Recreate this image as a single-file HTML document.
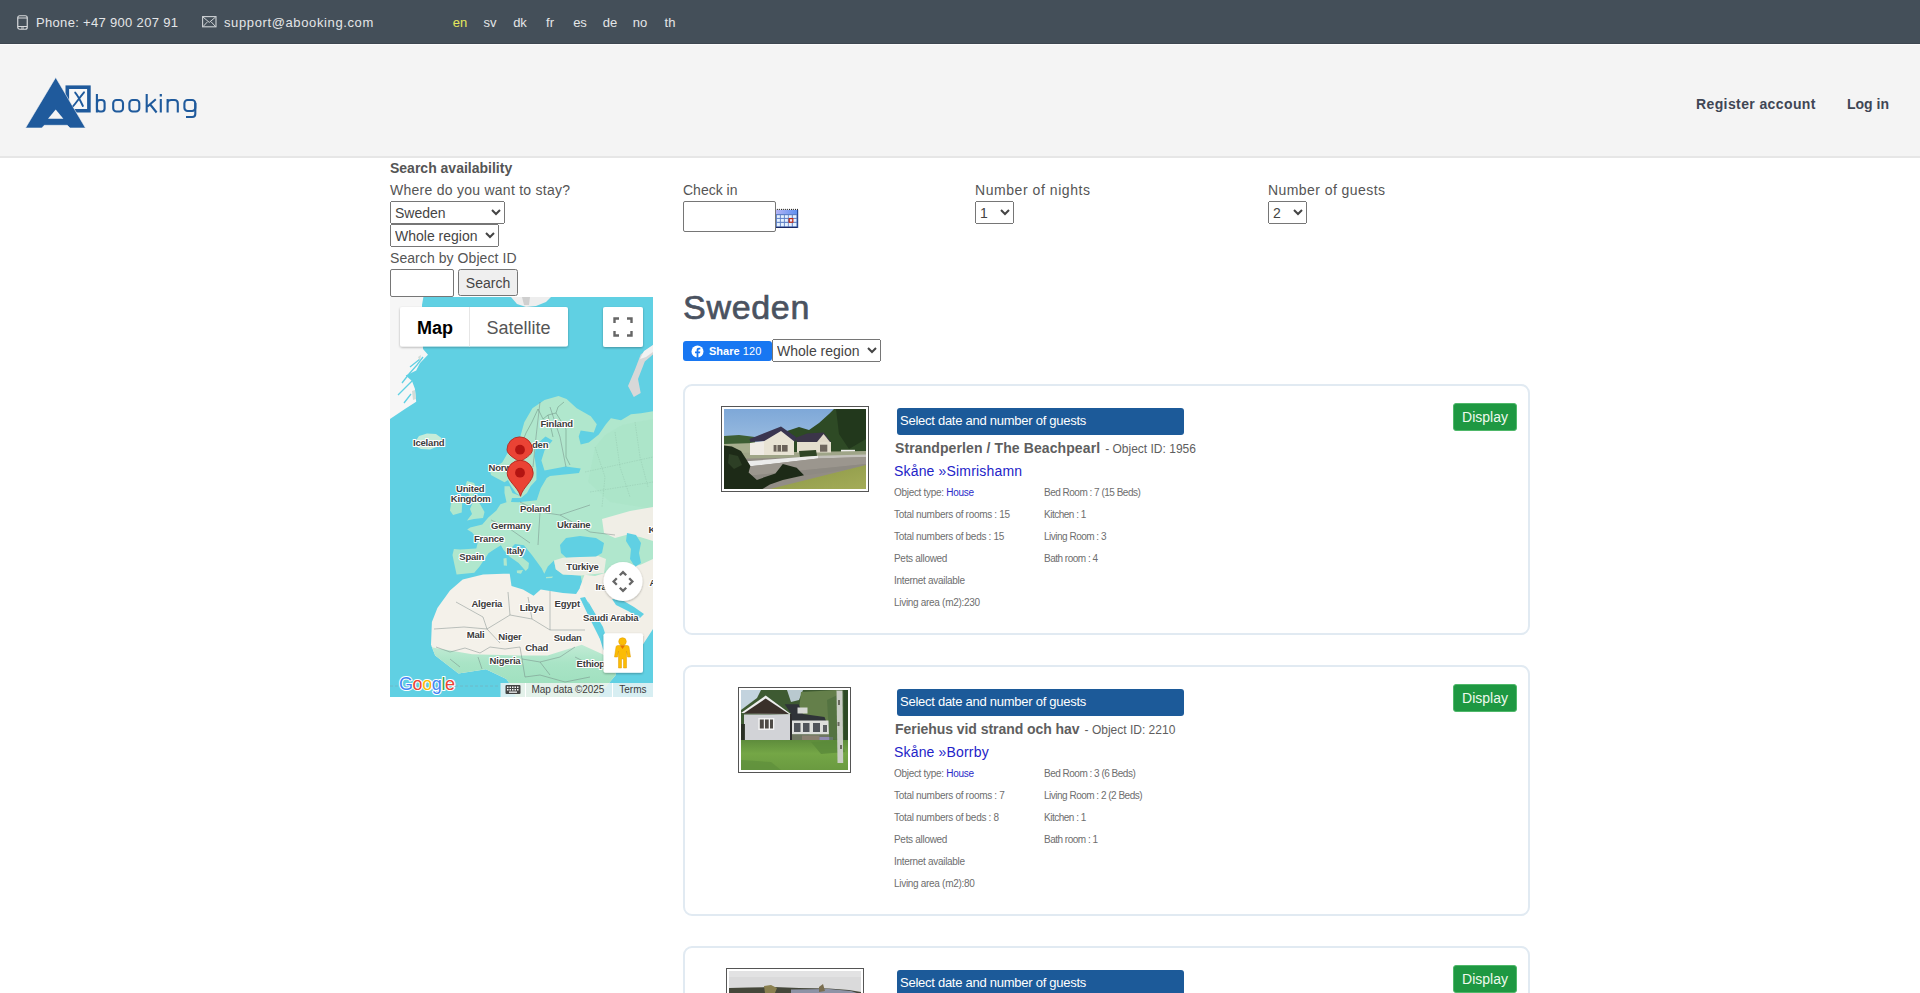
<!DOCTYPE html>
<html><head><meta charset="utf-8">
<style>
*{box-sizing:border-box}
html,body{margin:0;padding:0}
body{width:1920px;height:993px;overflow:hidden;position:relative;background:#fff;font-family:"Liberation Sans",sans-serif;color:#555}
.a{position:absolute;white-space:nowrap}
#top{position:absolute;left:0;top:0;width:1920px;height:44px;background:#444f59;border-bottom:1px solid #3d4650}
#top .t{color:#e4e6e8;font-size:13px;top:15px;line-height:16px}
#top .l{color:#e4e6e8;font-size:13px;top:15px;line-height:16px;width:30px;text-align:center}
#hdr{position:absolute;left:0;top:44px;width:1920px;height:114px;background:#f4f4f4;border-top:1px solid #fbfbfb;border-bottom:2px solid #e6e6e6}
.nav{color:#3f4654;font-size:14px;font-weight:bold;top:96px;line-height:17px}
.lbl{font-size:14px;color:#555;line-height:17px}
select{font-family:"Liberation Sans",sans-serif;font-size:14px;color:#444;margin:0}
.card{position:absolute;left:683px;width:847px;height:251px;border:2px solid #e1eaf2;border-radius:9px;background:#fff}
.sel{position:absolute;left:212px;top:22px;width:287px;height:27px;background:#1c5a99;border-radius:3px;color:#fff;font-size:13px;line-height:25px;padding-left:3px;letter-spacing:-0.26px}
.ttl{position:absolute;left:210px;letter-spacing:0.1px;top:54px;font-size:14px;font-weight:bold;color:#5e5e5e;line-height:17px;white-space:nowrap}
.ttl .oid{font-weight:normal;font-size:12px;margin-left:1px;letter-spacing:0}
.loc{position:absolute;left:209px;top:77px;letter-spacing:0.17px;font-size:14px;color:#2323c8;line-height:17px;white-space:nowrap}
.det{position:absolute;font-size:10px;color:#6e6e6e;line-height:12px;white-space:nowrap;letter-spacing:-0.3px}
.det.r{letter-spacing:-0.5px}
.det b{font-weight:normal;color:#2b2bc8}
.disp{position:absolute;left:768px;top:16.5px;width:64px;height:28px;background:#1e9842;border:1px solid #4fb86a;border-radius:3px;color:#eefaee;font-size:14px;line-height:26px;text-align:center}
.thumb{position:absolute;border:1px solid #555;background:#fff;padding:2px}
.thumb svg{display:block}
</style></head><body>

<div id="top">
  <svg class="a" style="left:17px;top:15px" width="11" height="15" viewBox="0 0 11 15"><rect x="0.75" y="0.75" width="9.5" height="13.5" rx="2" fill="none" stroke="#d8dadc" stroke-width="1.2"/><line x1="1" y1="3" x2="10" y2="3" stroke="#d8dadc" stroke-width="1"/><line x1="1" y1="11.5" x2="10" y2="11.5" stroke="#d8dadc" stroke-width="1"/><line x1="4" y1="13" x2="7" y2="13" stroke="#d8dadc" stroke-width="1"/></svg>
  <div id="tphone" class="a t" style="left:36px;letter-spacing:0.32px">Phone: +47 900 207 91</div>
  <svg class="a" style="left:202px;top:16px" width="15" height="12" viewBox="0 0 15 12"><rect x="0.6" y="0.6" width="13.4" height="10.2" fill="none" stroke="#cfd3d6" stroke-width="1.1"/><path d="M1 1 L7.3 6.4 L13.6 1 M1 10.6 L5.6 5.7 M13.6 10.6 L9 5.7" fill="none" stroke="#cfd3d6" stroke-width="1"/></svg>
  <div id="tsup" class="a t" style="left:224px;letter-spacing:0.62px">support@abooking.com</div>
  <div class="a l" style="left:445px;color:#e6e85c">en</div>
  <div class="a l" style="left:475px">sv</div>
  <div class="a l" style="left:505px">dk</div>
  <div class="a l" style="left:535px">fr</div>
  <div class="a l" style="left:565px">es</div>
  <div class="a l" style="left:595px">de</div>
  <div class="a l" style="left:625px">no</div>
  <div class="a l" style="left:655px">th</div>
</div>

<div id="hdr"></div>
<!-- logo -->
<svg class="a" style="left:20px;top:70px" width="190" height="60" viewBox="20 70 190 60">
  <rect x="65.5" y="85.4" width="25.2" height="27.1" fill="#1f5a9c"/>
  <rect x="69.1" y="89" width="18" height="20" fill="#f7f7f7"/>
  <path d="M55.7 77.5 L25.5 128 L41.8 128 L44.3 125.3 L67.3 125.3 L70 128 L85.5 128 Z" fill="#1f5a9c" stroke="#f7f7f7" stroke-width="0.6"/>
  <path d="M55.7 109.6 L48 118.8 L63.4 118.8 Z" fill="#f4f4f4"/>
  <path d="M84 92.3 C80.5 96.5 77 101.5 73.3 106 M75.2 92.6 C78.2 96.2 80.6 101 82.9 106" fill="none" stroke="#1f5a9c" stroke-width="1.9" stroke-linecap="round"/>
  <g fill="none" stroke="#1f5a9c" stroke-width="2.1">
<path d="M96.9 94 V112.5"/>
<rect x="97" y="100" width="7.6" height="11.5" rx="3"/>
<rect x="113.2" y="100" width="9.8" height="11.5" rx="3.3"/>
<rect x="129.4" y="100" width="9.9" height="11.5" rx="3.3"/>
<path d="M146.7 94 V112.5 M147.5 106.5 L155.8 99.3 M150.2 104.5 L156.6 112.5"/>
<path d="M160.8 99 V112.5"/>
<path d="M167.6 99 V112.5 M167.6 103.5 Q167.6 100 171.3 100 H174.3 Q177.8 100 177.8 103.5 V112.5"/>
<rect x="184.4" y="100" width="10.9" height="11" rx="3.2"/>
<path d="M195.3 103 V114 Q195.3 117 192.3 117 H186"/>
</g>
<rect x="159.7" y="94" width="2.2" height="2.5" fill="#1f5a9c"/>
</svg>
<div id="treg" class="a nav" style="left:1696px;letter-spacing:0.39px">Register account</div>
<div id="tlog" class="a nav" style="left:1847px">Log in</div>

<!-- search -->
<div class="a lbl" style="left:390px;top:160px;font-weight:bold" id="tsa">Search availability</div>
<div class="a lbl" style="left:390px;top:182px;letter-spacing:0.26px" id="twhere">Where do you want to stay?</div>
<select class="a" style="left:390px;top:201px;width:115px;height:23px"><option>Sweden</option></select>
<select class="a" style="left:390px;top:224px;width:109px;height:23px"><option>Whole region</option></select>
<div class="a lbl" style="left:390px;top:250px;letter-spacing:0.07px" id="tsbo">Search by Object ID</div>
<input class="a" style="left:390px;top:269px;width:64px;height:28px;border:1px solid #767676;border-radius:2px;margin:0">
<button class="a" style="left:458px;top:269px;width:60px;height:27px;font-family:'Liberation Sans';font-size:14px;color:#444;margin:0;padding:0">Search</button>

<div class="a lbl" style="left:683px;top:182px" id="tci">Check in</div>
<input class="a" style="left:683px;top:201px;width:93px;height:31px;border:1px solid #767676;border-radius:2px;margin:0">
<svg class="a" style="left:776px;top:204px" width="23" height="24" viewBox="0 0 23 24">
<defs><linearGradient id="calh" x1="0" y1="0" x2="1" y2="0"><stop offset="0" stop-color="#b4b4f4"/><stop offset="1" stop-color="#5a8ef0"/></linearGradient></defs>
<rect x="0" y="6" width="22" height="18" fill="#5d7fc6"/>
<rect x="0" y="6" width="22" height="4" fill="url(#calh)"/>
<rect x="0" y="22.8" width="22" height="1.2" fill="#1c2a66"/>
<rect x="21" y="6" width="1.2" height="18" fill="#2a4a90"/>
<g fill="#e6f2ff">
<rect x="0.9" y="11.2" width="3" height="2.7"/><rect x="4.8" y="11.2" width="3.1" height="2.7"/><rect x="8.8" y="11.2" width="3.1" height="2.7"/><rect x="12.7" y="11.2" width="3.1" height="2.7"/><rect x="16.8" y="11.2" width="3.6" height="2.7"/>
<rect x="0.9" y="14.9" width="3" height="2.9"/><rect x="4.8" y="14.9" width="3.1" height="2.9"/><rect x="8.8" y="14.9" width="3.1" height="2.9"/><rect x="16.8" y="14.9" width="3.6" height="2.9"/>
<rect x="0.9" y="18.9" width="3" height="3.4"/><rect x="4.8" y="18.9" width="3.1" height="3.4"/><rect x="8.8" y="18.9" width="3.1" height="3.4"/><rect x="12.7" y="18.9" width="3.1" height="3.4"/><rect x="16.8" y="18.9" width="3.6" height="3.4"/>
</g>
<rect x="13.2" y="14.6" width="3.6" height="3.6" fill="#f0e8ff" stroke="#c02a10" stroke-width="1.2"/>
<g fill="#111"><circle cx="1.3" cy="5.4" r="0.55"/><circle cx="3.3" cy="5.4" r="0.55"/><circle cx="5.4" cy="5.4" r="0.55"/><circle cx="7.3" cy="5.4" r="0.55"/><circle cx="9.3" cy="5.4" r="0.55"/><circle cx="11.3" cy="5.4" r="0.55"/><circle cx="13.4" cy="5.4" r="0.55"/><circle cx="15.4" cy="5.4" r="0.55"/><circle cx="17.3" cy="5.4" r="0.55"/><circle cx="19.4" cy="5.4" r="0.55"/><circle cx="21.4" cy="5.4" r="0.55"/></g>
</svg>

<div class="a lbl" style="left:975px;top:182px;letter-spacing:0.56px" id="tnn">Number of nights</div>
<select class="a" style="left:975px;top:201px;width:39px;height:23px"><option>1</option></select>
<div class="a lbl" style="left:1268px;top:182px;letter-spacing:0.43px" id="tng">Number of guests</div>
<select class="a" style="left:1268px;top:201px;width:39px;height:23px"><option>2</option></select>

<!-- map -->
<div class="a" id="map" style="left:390px;top:297px;width:263px;height:400px;overflow:hidden;background:#60d0e3"><svg width="263" height="400" viewBox="0 0 263 400" style="display:block;font-family:'Liberation Sans',sans-serif">
<defs>
<filter id="sh" x="-20%" y="-20%" width="140%" height="150%"><feDropShadow dx="0" dy="1" stdDeviation="1.2" flood-color="#000" flood-opacity="0.3"/></filter>
<linearGradient id="afg" x1="0" y1="0" x2="0" y2="1"><stop offset="0" stop-color="#c2ebd5"/><stop offset="0.35" stop-color="#a9e4c6"/><stop offset="1" stop-color="#9bdebb"/></linearGradient>
</defs>
<rect width="263" height="400" fill="#60d0e3"/>
<!-- Greenland -->
<path d="M0 0 L33.4 0 L32 8 L33 52 L38 57.7 L30 66 L26.2 73.4 L15.7 78.6 L22 84 L24.9 91.7 L26.2 104.8 L15.7 111.4 L0 121.9 Z" fill="#f6f6f6"/>
<path d="M12 86 L19 77 L27 68 L33 60 M8 98 L16 90 L24 82 M14 106 L21 97 M20 70 L30 62" fill="none" stroke="#60d0e3" stroke-width="1.3"/>
<path d="M22 94 L25 93 L26 102 L23 103 Z M28 60 L31 58 L30 64 Z" fill="#d0dcd8"/>
<!-- Svalbard -->
<path d="M121 0 L161 0 L156 5 L146 9 L136 10 L127 7 Z" fill="#eeeeee"/>
<path d="M132 0 L140 0 L139 8 L134 8 Z" fill="#cfcfcf"/>
<!-- Novaya Zemlya -->
<path d="M263 48 L250.7 57.5 L245 72.6 L238 89 L243.8 100 L250.7 96 L248 82 L254.8 64.4 L263 57.5 Z" fill="#d8d8d8"/>
<path d="M263 48 L254 54 L250 62 L256 60 L263 55 Z" fill="#f2f2f2"/>
<!-- Iceland -->
<path d="M25 145 L29 139 L37 136.5 L46 137 L51.5 141 L49 149 L40 152.5 L31 152 L26 149.5 Z" fill="#c6ecd9"/>
<!-- Eurasia -->
<path d="M263 114.2 L251.1 116.2 L241 117.2 L231 123.3 L220.9 121.3 L215.9 127.3 L208.8 137.4 L198.8 145.4 L190.7 147.5 L188.7 139.4 L190.7 133.4 L203.8 135.4 L206.8 127.3 L200.8 119.3 L186.7 111.2 L176.6 102.1 L168.5 99.1 L154.5 103.1 L142.4 111.2 L134.3 125.3 L130.3 139.4 L120 152 L112.2 165.6 L100 173.6 L101 178 L106.4 181.1 L114.5 185.2 L118 183 L121 189 L126 196 L130.6 199.3 L122.5 196 L119.5 189.2 L114.5 189.2 L114.5 196 L116.5 205.3 L110.4 207.3 L106.4 213.4 L98.3 220.4 L92.3 227.5 L80.2 230.5 L77.2 232.5 L82.2 235.5 L88.3 243.6 L86.3 251.6 L70.1 252.6 L63.9 251.9 L62.5 258 L63.9 265 L66.6 277.5 L84.3 275.8 L89.6 269.6 L98.5 256.3 L104 252.5 L110.9 248.3 L113.5 252.7 L119.7 259.8 L128.6 266 L133.9 272 L135.7 274 L138.3 271.3 L139 266 L134 262 L127 256 L122 250 L125 247 L133.9 248.3 L141.9 258 L151.6 271.3 L154.3 276.7 L157.8 269.6 L164 263.4 L165.8 272.2 L172.9 277.5 L190.6 278.4 L192.3 287.3 L200 284 L225 283 L263 280 Z" fill="#b0e7cd"/>
<path d="M205 150 L215 138 L232 128 L263 122 L263 212 L220 205 L198 185 Z" fill="#a8e3c6" opacity="0.45"/>
<g fill="none" stroke="#7aa896" stroke-width="0.45" stroke-dasharray="1.5 1" opacity="0.55">
<path d="M205 150 L215 180 L212 210 M225 135 L230 170 L240 200 M245 125 L250 160 L258 190 M195 175 L263 160 M200 195 L263 185"/>
</g>
<g fill="none" stroke="#5f7f70" stroke-width="0.55" opacity="0.8">
<path d="M148 112 L153 122 L158 118 L166 116 L168 110 L174 105 M158 118 L163 140 M166 116 L176 132 L176 160 L180 168 M148 112 L142 125 L136 136 L132 146"/>
</g>
<path d="M164 263.4 L172.9 260.7 L190 259.5 L208.3 259 L216 262 L214 276 L190.6 278.4 L172.9 277.5 L165.8 272.2 Z" fill="#e9ede2"/>
<path d="M113.5 261.6 L116.5 261 L117 268.7 L113.8 268.5 Z" fill="#b0e7cd"/>
<path d="M126.8 273.5 L133 273 L131 276.7 L127 276 Z" fill="#b0e7cd"/>
<path d="M156 280 L163 279.5 L162 281 L156 281.2 Z" fill="#b0e7cd"/>
<!-- Kazakhstan / steppe beige -->
<path d="M212 222 L240 214 L263 210 L263 244 L250 240 L236 238 L225 241 L214 236 Z" fill="#f0eee6"/>
<!-- Middle East beige -->
<path d="M189.8 290.4 L193 300 L199 306 L213 330 L222 358 L232 360 L250 352 L263 332 L263 262 L250 268 L236 270 L215 276 L205 279 L194.5 277.8 Z" fill="#f2efe7"/>

<!-- Persian gulf -->
<path d="M222 302 L232 303 L244 310 L254 317 L250 321 L238 314 L226 308 Z" fill="#60d0e3"/>
<!-- Black sea -->
<path d="M170 248 L176 241 L190 239 L206 241 L214 246 L212 256 L206 259.5 L190 260 L176 260.5 L171 256 Z" fill="#60d0e3"/>
<!-- Caspian -->
<path d="M237 236 L246 238 L251 246 L249 256 L251 266 L245 270 L240 262 L241 252 L236 244 Z" fill="#60d0e3"/>
<!-- Baltic + Bothnia -->
<path d="M155.5 139.4 L162.5 143.4 L154.5 153.5 L151.4 163.6 L154.5 173.6 L175.6 169.6 L190.7 171.6 L189 176 L160 179 L156.7 181.1 L150.7 191.2 L146.7 203.3 L128.5 205.3 L121 205 L122 201 L131 201 L137 196 L140.6 189.2 L146.4 183 L146.4 171.6 L144.4 159.5 L146.4 147.5 Z" fill="#60d0e3"/>
<!-- UK + Ireland -->
<path d="M77 184 L84 186 L86 190 L83 199 L90 207 L94.5 215 L93 221 L84 222 L77 223.5 L82 217 L80 212 L83 205 L78 196 L75 190 Z" fill="#b0e7cd"/>
<path d="M61 206.3 L68 204 L72.2 205.3 L71.7 215.4 L63.1 217.9 L60 213.4 Z" fill="#b0e7cd"/>
<!-- Africa -->
<path d="M72.7 282.5 L93.1 277.5 L113.5 276.7 L119.7 276.7 L121.5 289 L133 292.6 L143.6 298.8 L150.7 292.6 L172.9 296.1 L186.1 297 L192.3 287.3 L196 300 L205 325 L213 352 L220 362 L226 377.8 L219 386 L208 400 L126 400 L119.2 386 L116.4 381.9 L95.9 372.3 L68.5 376.4 L45.2 358.6 L41 347.7 L41.9 325 L47.4 311 L60 293.6 Z" fill="#f4f1ea"/>
<path d="M41 347.7 L42.5 350.4 L82.2 357.2 L130 358.6 L157.5 358.6 L191.8 347.7 L212 357 L220 362 L226 377.8 L219 386 L208 400 L126 400 L119.2 386 L116.4 381.9 L95.9 372.3 L68.5 376.4 L45.2 358.6 Z" fill="url(#afg)"/>
<!-- Red sea -->
<path d="M190 301 L195 300 L207 322 L216 344 L223 357 L219 359 L209 340 L199 320 Z" fill="#60d0e3"/>
<!-- borders -->
<g fill="none" stroke="#6b7b78" stroke-width="0.5" opacity="0.85">
<path d="M66 305 L93 320 L97 332 L110 346 M97 332 L120 318 L142 322 L160 333 M142 322 L138 300 M160 333 L160 294 M160 333 L195 333 M120 318 L118 295 M97 332 L74 330 L44 332 M46 350 L60 355 L75 351 L90 356 L100 350 L115 352 L130 350 L132 362 L150 365 L170 360 L185 350 M60 362 L70 370 M88 360 L92 372 M132 362 L135 380 L150 378 L175 385 L200 380 M150 365 L160 378 M185 360 L205 370"/>
<path d="M150 105 L146 140 L143 170 M160 110 L170 140 L176 170 M130 205 L150 215 L170 218 L200 208 M101 223 L120 232 L140 246 M150 215 L148 248 M170 218 L200 235 L225 238"/>
</g>
<!-- dashed line bottom -->
<path d="M0 389 L110 389" stroke="#7f9fa8" stroke-width="0.8" stroke-dasharray="3 2" opacity="0.6"/>
<!-- labels -->
<g font-size="9.5" font-weight="bold" fill="#3c3c3c" stroke="#fff" stroke-width="2.2" stroke-linejoin="round" paint-order="stroke" letter-spacing="-0.2">
<text x="23" y="148.6">Iceland</text>
<text x="150.5" y="129.5">Finland</text>
<text x="142" y="151">den</text>
<text x="98.5" y="173.5">Norw</text>
<text x="66" y="195">United</text>
<text x="60.8" y="205">Kingdom</text>
<text x="130" y="215.4">Poland</text>
<text x="101" y="231.7">Germany</text>
<text x="167" y="230.8">Ukraine</text>
<text x="84" y="245.4">France</text>
<text x="116.4" y="257.4">Italy</text>
<text x="69.3" y="262.5">Spain</text>
<text x="176.3" y="273">Türkiye</text>
<text x="205.6" y="292.8">Ira</text>
<text x="258.6" y="236">K</text>
<text x="259.4" y="289">A</text>
<text x="81.4" y="310.2">Algeria</text>
<text x="129.7" y="314.2">Libya</text>
<text x="164.5" y="310.2">Egypt</text>
<text x="193" y="324.4">Saudi Arabia</text>
<text x="76.7" y="341">Mali</text>
<text x="108.3" y="342.6">Niger</text>
<text x="163.7" y="344.2">Sudan</text>
<text x="135.2" y="353.7">Chad</text>
<text x="99.6" y="367.2">Nigeria</text>
<text x="186.6" y="369.5">Ethiopi</text>
</g>
<!-- pins -->
<g stroke="#b3261e" stroke-width="0.9">
<path d="M129.7 165 C126 162 117 158 117 152.6 A12.7 12.7 0 1 1 142.4 152.6 C142.4 158 134 162 129.7 165 Z" fill="#ea4335"/>
<circle cx="130" cy="152.7" r="4.9" fill="#b31412" stroke="none"/>
<path d="M130.5 199.3 C128 190 117.2 184 117.2 176.3 A13 13 0 1 1 143.2 176.3 C143.2 184 133 190 130.5 199.3 Z" fill="#ea4335"/>
<circle cx="130" cy="175.7" r="4.9" fill="#b31412" stroke="none"/>
</g>
<!-- map type control -->
<g filter="url(#sh)"><rect x="10" y="10" width="168" height="39.5" rx="2" fill="#fff"/></g>
<line x1="79.5" y1="10" x2="79.5" y2="49.5" stroke="#e6e6e6" stroke-width="1"/>
<text x="27" y="36.8" font-size="18" font-weight="bold" fill="#000">Map</text>
<text x="96.5" y="36.8" font-size="18" fill="#565656">Satellite</text>
<!-- fullscreen -->
<g filter="url(#sh)"><rect x="213" y="10" width="40" height="40" rx="2" fill="#fff"/></g>
<path d="M224.5 26 V21.5 H229 M237 21.5 H241.5 V26 M241.5 34 V38.5 H237 M229 38.5 H224.5 V34" fill="none" stroke="#666" stroke-width="2.4"/>
<!-- camera control -->
<g filter="url(#sh)"><circle cx="233" cy="284.5" r="19.5" fill="#fff"/></g>
<path d="M229.8 278.3 L233 275.1 L236.2 278.3 M239.2 281.3 L242.4 284.5 L239.2 287.7 M236.2 290.7 L233 293.9 L229.8 290.7 M226.8 287.7 L223.6 284.5 L226.8 281.3" fill="none" stroke="#666" stroke-width="2.3"/>
<!-- pegman -->
<g filter="url(#sh)"><rect x="213.5" y="336.3" width="39.5" height="39.5" rx="2" fill="#fff"/></g>
<g fill="#fbbc04" stroke="#e09a00" stroke-width="0.5">
<circle cx="232.5" cy="344.5" r="3.8"/>
<path d="M226 350 Q226 348.5 228 348.5 L237 348.5 Q239 348.5 239 350 L240.5 360 L237.5 360 L236.5 354 L236.5 371 L233.5 371 L233.5 362 L231.5 362 L231.5 371 L228.5 371 L228.5 354 L227.5 360 L224.5 360 Z"/>
</g>
<path d="M230 348.5 L232.5 352 L235 348.5 Z" fill="#e37400"/>
<!-- google logo -->
<g font-size="18" font-weight="normal" stroke="#fff" stroke-width="2" paint-order="stroke" stroke-linejoin="round" letter-spacing="-0.4">
<text x="9" y="393"><tspan fill="#4285f4">G</tspan><tspan fill="#ea4335">o</tspan><tspan fill="#fbbc05">o</tspan><tspan fill="#4285f4">g</tspan><tspan fill="#34a853">l</tspan><tspan fill="#ea4335">e</tspan></text>
</g>
<!-- bottom attribution -->
<rect x="110.5" y="386" width="152.5" height="14" fill="#f5f5f5" opacity="0.8"/>
<line x1="135.5" y1="386" x2="135.5" y2="400" stroke="#fff" stroke-width="1"/>
<line x1="222.5" y1="386" x2="222.5" y2="400" stroke="#fff" stroke-width="1"/>
<g fill="#444"><rect x="115.5" y="388" width="15" height="9" rx="1"/></g>
<g fill="#f5f5f5"><rect x="117" y="389.5" width="1.5" height="1.5"/><rect x="119.5" y="389.5" width="1.5" height="1.5"/><rect x="122" y="389.5" width="1.5" height="1.5"/><rect x="124.5" y="389.5" width="1.5" height="1.5"/><rect x="127" y="389.5" width="1.5" height="1.5"/><rect x="117" y="392" width="1.5" height="1.5"/><rect x="119.5" y="392" width="1.5" height="1.5"/><rect x="122" y="392" width="1.5" height="1.5"/><rect x="124.5" y="392" width="1.5" height="1.5"/><rect x="127" y="392" width="1.5" height="1.5"/><rect x="119" y="394.5" width="8" height="1.3"/></g>
<text x="141.5" y="396.4" font-size="10" fill="#3c3c3c" letter-spacing="-0.1">Map data ©2025</text>
<text x="229.3" y="396.4" font-size="10" fill="#3c3c3c">Terms</text>
</svg>
</div>

<!-- heading -->
<div class="a" style="left:683px;top:287px;font-size:34px;color:#4a5260;line-height:40px;letter-spacing:0.7px;-webkit-text-stroke:0.7px #4a5260" id="tsw">Sweden</div>
<div class="a" style="left:683px;top:341px;width:89px;height:20px;background:#1877f2;border-radius:3px">
<svg class="a" style="left:7.5px;top:3.5px" width="13" height="13" viewBox="0 0 13 13"><circle cx="6.5" cy="6.5" r="6" fill="#fff"/><path d="M7.4 13 V8.3 H9 L9.3 6.5 H7.4 V5.4 C7.4 4.8 7.7 4.4 8.4 4.4 H9.3 V2.8 C9 2.75 8.5 2.7 7.9 2.7 C6.5 2.7 5.6 3.5 5.6 5 V6.5 H4 V8.3 H5.6 V13 Z" fill="#1877f2"/></svg>
<div class="a" id="fbt" style="left:26px;top:3px;font-size:11px;line-height:14px;color:#fff"><b>Share</b> <span style="letter-spacing:0.2px">120</span></div>
</div>
<select class="a" style="left:772px;top:339px;width:109px;height:23px"><option>Whole region</option></select>

<!-- cards -->
<div class="card" style="top:384px">
  <div class="thumb" style="left:36px;top:20px;width:148px;height:86px"><svg width="142" height="80" viewBox="0 0 142 80">
<defs><linearGradient id="t1sky" x1="0" y1="0" x2="0" y2="1"><stop offset="0" stop-color="#7ea8d8"/><stop offset="1" stop-color="#c0d6ea"/></linearGradient>
<linearGradient id="t1lawn" x1="0" y1="0" x2="1" y2="1"><stop offset="0" stop-color="#8a9646"/><stop offset="1" stop-color="#a4ac58"/></linearGradient></defs>
<rect width="142" height="80" fill="url(#t1sky)"/>
<path d="M0 44 L142 42 L142 80 L0 80 Z" fill="#928d85"/>
<path d="M0 27 L15 26 L31 28 L31 35 L0 36 Z" fill="#3d5e33"/>
<path d="M0 35 L30 34 L30 46 L0 48 Z" fill="#a7ae8e"/>
<path d="M63 22 L75 18 L85 21 L95 14 L105 5 L110 0 L142 0 L142 45 L100 46 L70 43 Z" fill="#2e4a25"/>
<path d="M112 0 L142 0 L142 30 L125 40 L115 25 Z" fill="#22381c"/>
<rect x="117" y="40.8" width="14" height="3.5" fill="#eeeeec"/>
<path d="M0 44 L142 42 L142 47 L0 50 Z" fill="#9fa588"/>
<path d="M26 34 L40 32 L40 46 L26 46 Z" fill="#efebe5"/>
<path d="M40 32 L57 20 L70 30 L70 46 L40 46 Z" fill="#e8e3d4"/>
<path d="M25.5 30 L57 17.6 L72 28 L71 33 L57 22 L40.3 32 L26.4 33 Z" fill="#3a3550"/>
<rect x="49.6" y="36" width="14" height="6.6" fill="#6a625a"/>
<rect x="52.5" y="36" width="1" height="6.6" fill="#e2dccb"/><rect x="57" y="36" width="1" height="6.6" fill="#e2dccb"/>
<rect x="73" y="33" width="34" height="10.5" fill="#e4dece"/>
<path d="M71 29 L83 24.6 L91 24 L99.6 23.6 L107 33 L73 33 Z" fill="#3b3549"/>
<path d="M93 33 L99.6 25 L106 33 Z" fill="#e0d9c8"/>
<rect x="96" y="35.7" width="7.3" height="7" fill="#6f675e"/>
<path d="M75 42 L92 41 L93 47 L76 48 Z" fill="#2f4526"/>
<path d="M7.9 53.3 L94 46.8 L94 49.6 L12.5 58.8 Z" fill="#ebebea"/>
<path d="M94 46.8 L142 45.5 L142 48 L94 49.6 Z" fill="#c4c2bc"/>
<path d="M12.5 58.8 L94 49.6 L142 48 L142 55 L21.8 67 Z" fill="#9b968e"/>
<path d="M21.8 67 L142 55 L142 58 L40 72 Z" fill="#8e8a83"/>
<path d="M45.9 80 L142 56 L142 80 Z" fill="url(#t1lawn)"/>
<path d="M0 36.6 L7.9 37.5 L17 42 L21.8 49.6 L26.4 57 L24.6 63.5 L32.9 70.9 L51.4 64.4 L58.8 55 L72.7 58.8 L80 66.3 L58.8 70.9 L45.9 75.5 L38.5 80 L0 80 Z" fill="#1d2a17"/>
<path d="M5 45 L14 47 L18 56 L10 60 L4 54 Z" fill="#2d3f25"/>
</svg></div>
  <div class="sel"><span id="c1sel">Select date and number of guests</span></div>
  <div class="ttl"><span id="c1tb">Strandperlen / The Beachpearl</span> <span class="oid" id="c1ts">- Object ID: 1956</span></div>
  <div class="loc"><span id="c1loc">Skåne »Simrishamn</span></div>
  <div class="det" style="left:209px;top:101px" id="c1d1">Object type: <b>House</b></div>
  <div class="det" style="left:209px;top:123px" id="c1d2">Total numbers of rooms : 15</div>
  <div class="det" style="left:209px;top:145px" id="c1d3">Total numbers of beds : 15</div>
  <div class="det" style="left:209px;top:167px" id="c1d4">Pets allowed</div>
  <div class="det" style="left:209px;top:189px" id="c1d5">Internet available</div>
  <div class="det" style="left:209px;top:211px" id="c1d6">Living area (m2):230</div>
  <div class="det r" style="left:359px;top:101px" id="c1r1">Bed Room : 7 (15 Beds)</div>
  <div class="det r" style="left:359px;top:123px" id="c1r2">Kitchen : 1</div>
  <div class="det r" style="left:359px;top:145px" id="c1r3">Living Room : 3</div>
  <div class="det r" style="left:359px;top:167px" id="c1r4">Bath room : 4</div>
  <div class="disp"><span id="c1disp">Display</span></div>
</div>

<div class="card" style="top:665px">
  <div class="thumb" style="left:53px;top:20px;width:113px;height:86px"><svg width="107" height="80" viewBox="0 0 107 80">
<defs><linearGradient id="t2lawn" x1="0" y1="0" x2="0" y2="1"><stop offset="0" stop-color="#5e8c3c"/><stop offset="0.45" stop-color="#74a646"/><stop offset="1" stop-color="#6a9a40"/></linearGradient></defs>
<rect width="107" height="80" fill="#3e5a32"/>
<path d="M0 0 L20 0 L16 8 L8 14 L0 20 Z" fill="#c3d3de"/>
<path d="M46 0 L62 0 L58 10 L50 12 Z" fill="#b9c9cf"/>
<path d="M60 2 L96 0 L96 50 L70 48 L58 20 Z" fill="#647f4a"/>
<path d="M0 23 L24.7 5.6 L50.7 24.7 Z" fill="#eeeeee"/>
<path d="M2.5 23.5 L24.7 8.5 L48 24 Z" fill="#3a302a"/>
<rect x="3" y="24.5" width="46" height="25.5" fill="#d2d3d7"/>
<rect x="0" y="34" width="3.9" height="19" fill="#2a3024"/>
<rect x="17.3" y="28" width="16" height="12" fill="#f2f2f2"/>
<rect x="18.8" y="29.5" width="4" height="9" fill="#4e4a46"/><rect x="24" y="29.5" width="3.7" height="9" fill="#4e4a46"/><rect x="29" y="29.5" width="3" height="9" fill="#4e4a46"/>
<rect x="49" y="24" width="2" height="27" fill="#2c2c2c"/>
<path d="M43.7 14.3 L57.6 14.3 L62 24 L83.5 27 L85 31 L51 31 L50.7 24.7 Z" fill="#2f3338"/>
<rect x="56.5" y="17.5" width="10" height="6" fill="#d6d8d4"/>
<rect x="51" y="30.5" width="36.9" height="14" fill="#dedfdc"/>
<rect x="53" y="33" width="6.5" height="9" fill="#50545a"/><rect x="62" y="33" width="6.5" height="9" fill="#50545a"/><rect x="72" y="33" width="7" height="9" fill="#50545a"/><rect x="82" y="35" width="4" height="7" fill="#5a5e62"/>
<path d="M51 44.5 L88 44.5 L88 52 L51 52 Z" fill="#6e7660"/>
<rect x="61" y="45.5" width="17.4" height="8.5" fill="#8a8070"/>
<rect x="78.4" y="47" width="13.6" height="5.4" fill="#978ec0" opacity="0.85"/>
<path d="M86 10 L107 0 L107 78 L90 78 Z" fill="#4a6a3c" opacity="0.6"/>
<rect x="102.6" y="0" width="4.4" height="76" fill="#2e4a26"/>
<rect x="0" y="50" width="107" height="30" fill="url(#t2lawn)"/>
<path d="M70 52 L100 50 L104 62 L80 64 Z" fill="#5a8a3a" opacity="0.8"/>
<path d="M0 70 L30 72 L40 80 L0 80 Z" fill="#5e8e3c" opacity="0.7"/>
<path d="M95.5 0.4 L101.5 0.4 L102.2 73 L96.5 73 Z" fill="#c9cdc4"/>
<rect x="97" y="10" width="2" height="5" fill="#6b6b60"/><rect x="96.5" y="32" width="2" height="4" fill="#6b6b60"/><rect x="99" y="55" width="2" height="4" fill="#6b6b60"/>
</svg></div>
  <div class="sel"><span>Select date and number of guests</span></div>
  <div class="ttl"><span id="c2tb" style="letter-spacing:-0.05px">Feriehus vid strand och hav</span> <span class="oid" id="c2ts">- Object ID: 2210</span></div>
  <div class="loc"><span id="c2loc">Skåne »Borrby</span></div>
  <div class="det" style="left:209px;top:101px">Object type: <b>House</b></div>
  <div class="det" style="left:209px;top:123px" id="c2d2">Total numbers of rooms : 7</div>
  <div class="det" style="left:209px;top:145px" id="c2d3">Total numbers of beds : 8</div>
  <div class="det" style="left:209px;top:167px">Pets allowed</div>
  <div class="det" style="left:209px;top:189px">Internet available</div>
  <div class="det" style="left:209px;top:211px" id="c2d6">Living area (m2):80</div>
  <div class="det r" style="left:359px;top:101px" id="c2r1">Bed Room : 3 (6 Beds)</div>
  <div class="det r" style="left:359px;top:123px" id="c2r2">Living Room : 2 (2 Beds)</div>
  <div class="det r" style="left:359px;top:145px">Kitchen : 1</div>
  <div class="det r" style="left:359px;top:167px">Bath room : 1</div>
  <div class="disp"><span>Display</span></div>
</div>

<div class="card" style="top:946px">
  <div class="thumb" style="left:41px;top:20px;width:138px;height:86px"><svg width="132" height="80" viewBox="0 0 132 80">
<rect width="132" height="80" fill="#dadadb"/>
<rect y="0" width="132" height="6" fill="#e2e2e3"/>
<path d="M0 17 L20 16.5 L45 16 L70 17 L100 17.5 L120 19 L132 21 L132 80 L0 80 Z" fill="#45473a"/>
<path d="M62 18.5 L100 18 L122 20 L128 22 L128 80 L62 80 Z" fill="#8e93a6"/>
<path d="M35 15 L42 14 L48 17 L46 22 L36 22 Z" fill="#8a8050"/>
<path d="M90 16 L94 13 L96 20 L90 21 Z" fill="#7a6e50"/>
</svg></div>
  <div class="sel"><span>Select date and number of guests</span></div>
  <div class="disp"><span>Display</span></div>
</div>

</body></html>
